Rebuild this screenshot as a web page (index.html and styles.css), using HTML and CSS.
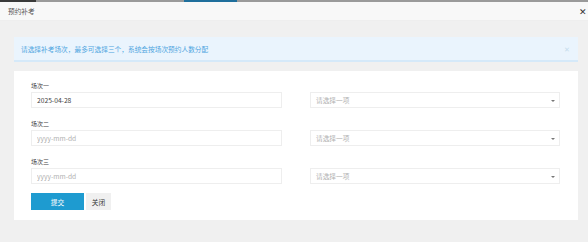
FILE: index.html
```html
<!DOCTYPE html>
<html lang="zh-CN">
  <head>
    <meta charset="UTF-8" />
    <title>预约补考</title>
    <link rel="stylesheet" href="styles.css">
  </head>
  <body>
    <div class="topbar">
      <span class="seg seg-dark"></span>
      <span class="seg seg-gray" style="width: 148px"></span>
      <span class="seg seg-blue"></span>
      <span class="seg seg-gray seg-fill"></span>
    </div>
    <div class="layer-title">
      <span>预约补考</span>
      <span class="layer-close">&#x2715;</span>
    </div>
    <div class="layer-body">
      <div class="alert">
        <span>请选择补考场次，最多可选择三个，系统会按场次预约人数分配</span>
        <span class="alert-close">&#x2715;</span>
      </div>
      <form class="card">
        <div class="row">
          <label class="row-label">场次一</label>
          <input class="field" type="text" value="2025-04-28" placeholder="yyyy-mm-dd" />
          <div class="select">请选择一项<span class="caret"></span></div>
        </div>
        <div class="row">
          <label class="row-label">场次二</label>
          <input class="field" type="text" placeholder="yyyy-mm-dd" />
          <div class="select">请选择一项<span class="caret"></span></div>
        </div>
        <div class="row">
          <label class="row-label">场次三</label>
          <input class="field" type="text" placeholder="yyyy-mm-dd" />
          <div class="select">请选择一项<span class="caret"></span></div>
        </div>
        <div class="buttons">
          <button class="btn btn-primary" type="button">提交</button>
          <button class="btn btn-plain" type="button">关闭</button>
        </div>
      </form>
    </div>
  </body>
</html>
```
FILE: styles.css
```css
html {
  font-family: "Noto Sans CJK SC", "Noto Sans", sans-serif;
  font-size: 6.7px;
  color: #444;
}
body {
  margin: 0;
  padding: 0;
  background: #f0f0f0;
  height: 242px;
  overflow: hidden;
}
.topbar {
  display: flex;
  height: 2px;
}
.seg-dark {
  width: 36px;
  background: #3a3a3a;
}
.seg-gray {
  background: #9a9a9a;
}
.seg-blue {
  width: 53px;
  background: #1f6f9c;
}
.seg-fill {
  flex: 1;
}
.layer-title {
  display: flex;
  justify-content: space-between;
  align-items: center;
  height: 19px;
  padding: 0 1px 0 8px;
  background: #f8f8f8;
  border-bottom: 1px solid #eee;
  box-sizing: border-box;
  color: #555;
}
.layer-close {
  font-size: 9px;
  color: #333;
}
.layer-body {
  padding: 16px 10px 0 14px;
}
.alert {
  display: flex;
  justify-content: space-between;
  align-items: center;
  height: 25px;
  box-sizing: border-box;
  padding: 0 8px 0 7px;
  background: #eaf4fd;
  border-bottom: 2px solid #d5e9f9;
  color: #4ea5df;
}
.alert-close {
  color: #c6dcec;
  font-size: 7px;
}
.card {
  margin-top: 9px;
  background: #fff;
  padding: 9px 18px 10px 17px;
  display: flex;
  flex-direction: column;
  gap: 10px;
}
.row {
  display: grid;
  grid-template-columns: 251px 250px;
  column-gap: 28px;
  grid-template-rows: 12px 16px;
}
.row-label {
  grid-column: 1;
  grid-row: 1;
  line-height: 12px;
  font-size: 6px;
  color: #444;
}
.field {
  grid-column: 1;
  grid-row: 2;
  box-sizing: border-box;
  height: 16px;
  border: 1px solid #eee;
  padding: 0 5px;
  font: inherit;
  color: #444;
  outline: none;
}
.field::placeholder {
  color: #b0b0b0;
}
.select {
  grid-column: 2;
  grid-row: 2;
  position: relative;
  box-sizing: border-box;
  height: 16px;
  border: 1px solid #eee;
  padding: 0 5px;
  display: flex;
  align-items: center;
  color: #b0b0b0;
}
.caret {
  position: absolute;
  right: 4px;
  top: 7px;
  border: 2px solid transparent;
  border-top: 2px solid #777;
  border-bottom: 0;
}
.buttons {
  display: flex;
  gap: 2px;
  margin-top: -1px;
}
.btn {
  height: 17px;
  border: none;
  font: inherit;
  padding: 0;
  cursor: pointer;
}
.btn-primary {
  width: 53px;
  background: #1e9bd0;
  color: #fff;
}
.btn-plain {
  width: 25px;
  background: #f0f0f0;
  color: #333;
}
```
